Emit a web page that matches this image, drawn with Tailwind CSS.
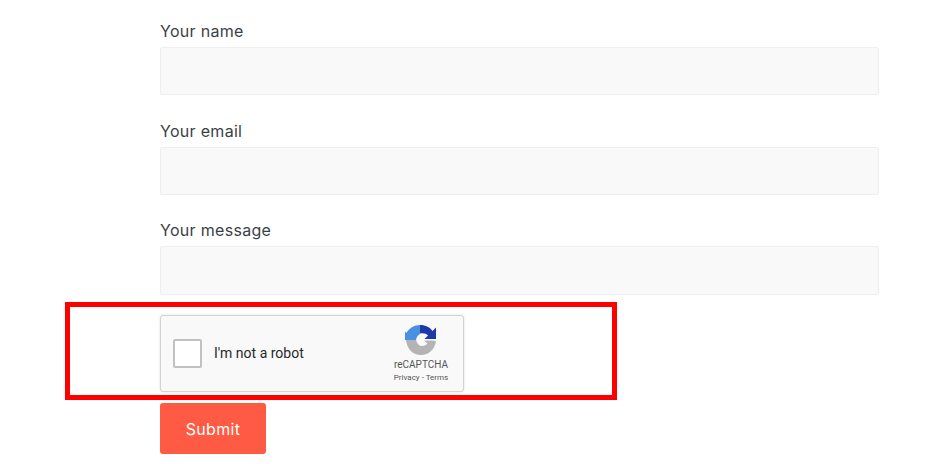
<!DOCTYPE html>
<html lang="en">
<head>
    <meta charset="UTF-8">
    <title>Contact form</title>
    <script src="https://cdn.jsdelivr.net/npm/@tailwindcss/browser@4"></script>
</head>
<body class="bg-white font-['Inter',sans-serif] h-[464px] overflow-hidden">
    <form class="relative w-[719px] ml-[160px] pt-[20px]">
        <label class="block h-[27px] text-[16px] leading-[22px] tracking-[0.3px] text-[#3a3f47]">Your name</label>
        <div class="h-[48px] bg-[#f9f9f9] border border-[#eeeeee] rounded-[2px]"></div>

        <label class="block mt-[25px] h-[27px] text-[16px] leading-[22px] tracking-[0.3px] text-[#3a3f47]">Your email</label>
        <div class="h-[48px] bg-[#f9f9f9] border border-[#eeeeee] rounded-[2px]"></div>

        <label class="block mt-[24px] h-[27px] text-[16px] leading-[22px] tracking-[0.3px] text-[#3a3f47]">Your message</label>
        <div class="h-[49px] bg-[#f9f9f9] border border-[#eeeeee] rounded-[2px]"></div>

        <!-- recaptcha widget -->
        <div class="mt-[20px] w-[304px] h-[77px] flex items-center bg-[#f9f9f9] border border-[#d3d3d3] rounded-[3px] shadow-[0_0_3px_#e2e2e2] font-['Roboto',sans-serif]">
            <div class="ml-[12px] w-[29px] h-[29px] bg-white border-2 border-[#c1c1c1] rounded-[2px]"></div>
            <span class="ml-[12px] text-[14px] text-[#282828]">I'm not a robot</span>
            <div class="ml-auto mr-[13px] w-[58px] flex flex-col items-center">
                <svg class="w-[32px] h-[32px] mt-[1px]" viewBox="0 0 32 32">
                    <!-- blue top left -->
                    <path fill="#4a90e2" d="M15 1 C9 1 4 4.500 1.500 9 L0 7.500 V16 H9 L11 16 C11.500 13 13 11 15 10 Z"/>
                    <!-- dark blue top right -->
                    <path fill="#1c3aa9" d="M15 1 C21 1 25 3.500 27.500 7 L31 3.500 V15 H19.500 L23 11.500 C21.500 10 19 9 15 9.500 Z"/>
                    <!-- grey bottom -->
                    <path fill="#b4b4b4" d="M1 16 H11 C12 20 14.500 22 17 22 C20 22 21 21 22.500 19.500 L19 16.500 H26.500 L31 17 C30 25 24 31 16 31 C8 31 2 25 1 16 Z"/>
                </svg>
                <span class="mt-[3px] text-[10px] leading-[12px] text-[#555555]">reCAPTCHA</span>
                <span class="mt-[1px] text-[8px] leading-[12px] text-[#555555] whitespace-nowrap">Privacy - Terms</span>
            </div>
        </div>

        <button type="button" class="block mt-[11px] w-[106px] h-[51px] bg-[#ff5a43] rounded-[3px] text-white text-[16px] tracking-[0.3px]">Submit</button>

        <!-- red highlight round the captcha -->
        <div class="absolute left-[-95px] top-[302px] w-[552px] h-[98px] border-[5px] border-[#ff0000]"></div>
    </form>
</body>
</html>
